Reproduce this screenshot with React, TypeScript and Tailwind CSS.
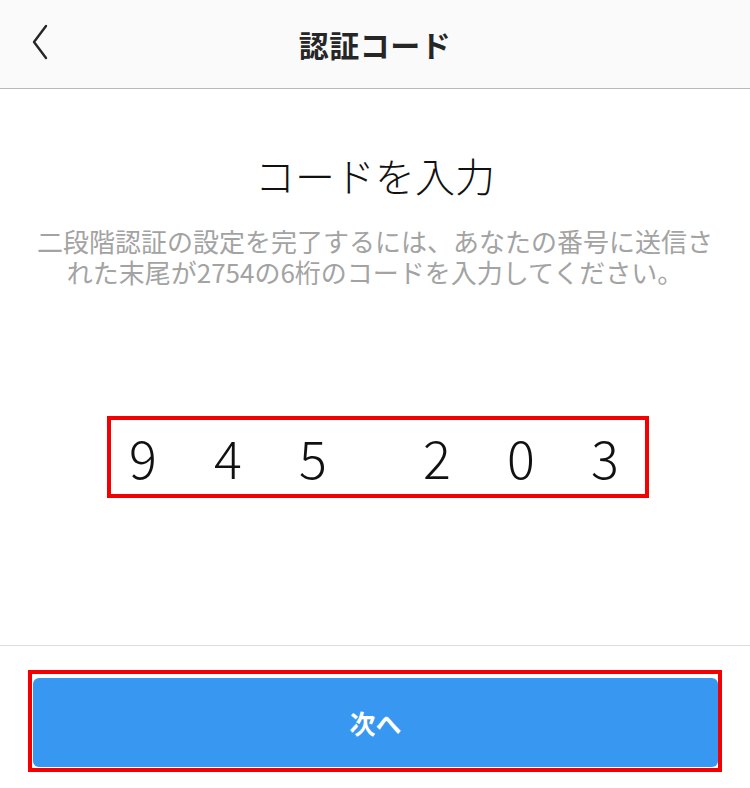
export default function App() {
  const first = ["9", "4", "5"];
  const second = ["2", "0", "3"];

  return (
    <div
      className="w-[750px] h-[788px] bg-white flex flex-col overflow-hidden"
      style={{ fontFamily: '"Noto Sans CJK JP", "Noto Sans", sans-serif' }}
    >
      {/* header */}
      <div className="relative h-[89px] shrink-0 bg-[#fafafa] border-b border-[#b9b9b9] flex items-center justify-center">
        <button className="absolute left-[28px] top-[23px] w-[22px] h-[38px] flex items-center justify-center">
          <svg width="18" height="36" viewBox="0 0 18 36" fill="none">
            <path d="M16 2 L4 18 L16 34" stroke="#262626" strokeWidth="2.4" strokeLinecap="round" strokeLinejoin="round" />
          </svg>
        </button>
        <h1 className="text-[30px] font-bold text-[#262626] tracking-[0.5px]">認証コード</h1>
      </div>

      {/* body */}
      <div className="flex-1 flex flex-col items-center">
        <h2 className="mt-[62px] text-[40px] leading-[48px] font-light text-[#111]">コードを入力</h2>
        <div className="mt-[27px] w-[720px] flex flex-col items-center text-[26px] leading-[30px] text-[#a3a3a3]">
          <p className="h-[30px]">二段階認証の設定を完了するには、あなたの番号に送信さ</p>
          <p className="mt-[1px] h-[30px]">れた末尾が2754の6桁のコードを入力してください。</p>
        </div>

        <div className="mt-[129px] ml-[6px] w-[542px] h-[82px] border-4 border-[#f50000] flex items-center pl-[12px] text-[52px] font-light text-[#111]">
          {first.map((d, i) => (
            <span key={"a" + i} className={`w-10 text-center ${i > 0 ? "ml-[45px]" : ""}`}>
              {d}
            </span>
          ))}
          {second.map((d, i) => (
            <span key={"b" + i} className={`w-10 text-center ${i > 0 ? "ml-[44px]" : "ml-[84px]"}`}>
              {d}
            </span>
          ))}
        </div>
      </div>

      {/* footer */}
      <div className="h-[143px] shrink-0 border-t border-[#dbdbdb] pt-[24px] flex justify-center">
        <div className="w-[694px] h-[102px] border-4 border-[#f50000] pt-[4px] pl-[1px] pb-[1px]">
          <button className="w-full h-full rounded-[6px] bg-[#3897f0] text-white text-[26px] font-bold">
            次へ
          </button>
        </div>
      </div>
    </div>
  );
}
